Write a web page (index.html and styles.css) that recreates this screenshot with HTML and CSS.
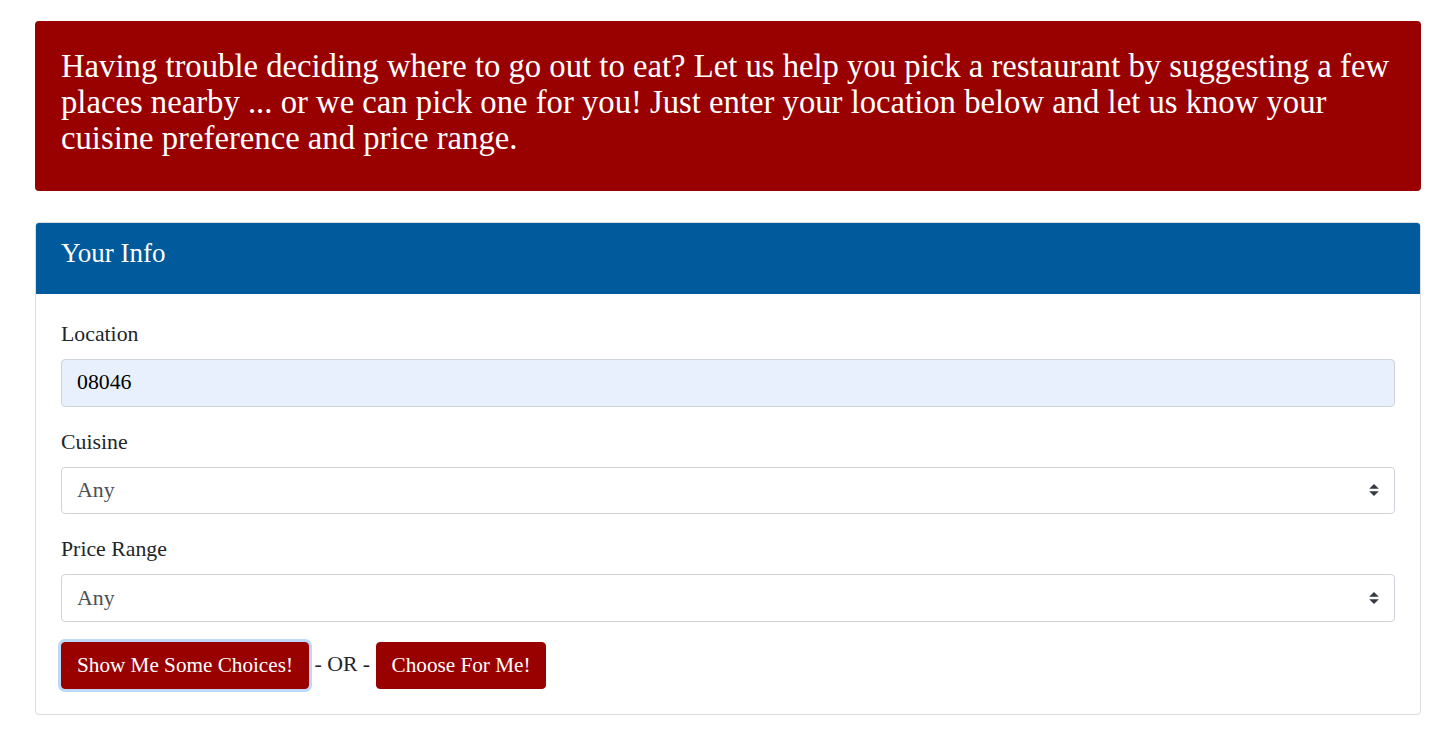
FILE: index.html
```html
<!DOCTYPE html>
<html lang="en">
<head>
<meta charset="utf-8">
<title>Restaurant Picker</title>
<link rel="stylesheet" href="styles.css">
</head>
<body>
<div class="page">
  <div class="banner">
    <p class="lead">Having trouble deciding where to go out to eat? Let us help you pick a restaurant by suggesting a few places nearby ... or we can pick one for you! Just enter your location below and let us know your cuisine preference and price range.</p>
  </div>
  <div class="card">
    <div class="card-header"><h3 class="card-title">Your Info</h3></div>
    <div class="card-body">
      <div class="form-group">
        <label class="label" for="loc">Location</label>
        <input class="form-control autofill" id="loc" type="text" value="08046">
      </div>
      <div class="form-group">
        <label class="label" for="cuisine">Cuisine</label>
        <select class="form-control select" id="cuisine"><option>Any</option></select>
      </div>
      <div class="form-group">
        <label class="label" for="price">Price Range</label>
        <select class="form-control select" id="price"><option>Any</option></select>
      </div>
      <div class="actions"><button class="btn btn-focus" type="button">Show Me Some Choices!</button> - OR - <button class="btn" type="button">Choose For Me!</button></div>
    </div>
  </div>
</div>
</body>
</html>
```

FILE: styles.css
```css
html, body {
  margin: 0;
  padding: 0;
  background: #fff;
}
body {
  font-family: "Liberation Serif", "Times New Roman", serif;
  font-size: 21.8px;
  line-height: 30px;
  color: #212529;
}
.page {
  padding: 21px 28px 18px 35px;
}
.banner {
  background: #990000;
  color: #fff;
  border-radius: 4px;
  padding: 27px 26px 35px 26px;
}
.lead {
  margin: 0;
  font-size: 32.7px;
  line-height: 36px;
}
.card {
  margin-top: 31px;
  border: 1px solid #dcdcdc;
  border-radius: 4px;
  overflow: hidden;
}
.card-header {
  background: #005a9c;
  color: #fff;
  padding: 15px 25px 26px 25px;
}
.card-title {
  margin: 0;
  font-weight: normal;
  font-size: 27px;
  line-height: 30px;
}
.card-body {
  padding: 25px 25px 25px 25px;
}
.form-group {
  margin-bottom: 20px;
}
.label {
  display: block;
  margin-bottom: 10px;
  line-height: 30px;
}
.form-control {
  display: block;
  box-sizing: border-box;
  width: 100%;
  height: 47.5px;
  padding: 7.5px 15px;
  font-family: inherit;
  font-size: 21.8px;
  line-height: 30px;
  color: #495057;
  background: #fff;
  border: 1px solid #ced4da;
  border-radius: 4px;
  outline: none;
  margin: 0;
}
.autofill {
  background: #e8f0fe;
  color: #000;
}
.select {
  -webkit-appearance: none;
  appearance: none;
  padding-right: 40px;
  background-image: url("data:image/svg+xml,%3Csvg xmlns='http://www.w3.org/2000/svg' width='4' height='5' viewBox='0 0 4 5'%3E%3Cpath fill='%23343a40' d='M2 0L0 2h4zm0 5L0 3h4z'/%3E%3C/svg%3E");
  background-repeat: no-repeat;
  background-position: right 15px center;
  background-size: 10px 12px;
}
.actions {
  line-height: 30px;
}
.btn {
  display: inline-block;
  vertical-align: middle;
  font-family: inherit;
  font-size: 21.2px;
  line-height: 30px;
  color: #fff;
  background: #990000;
  border: 1px solid #990000;
  border-radius: 4px;
  padding: 7.75px 15px;
  margin: 0;
  cursor: pointer;
}
.btn-focus {
  box-shadow: 0 0 0 3px #bed8f9;
}
```
